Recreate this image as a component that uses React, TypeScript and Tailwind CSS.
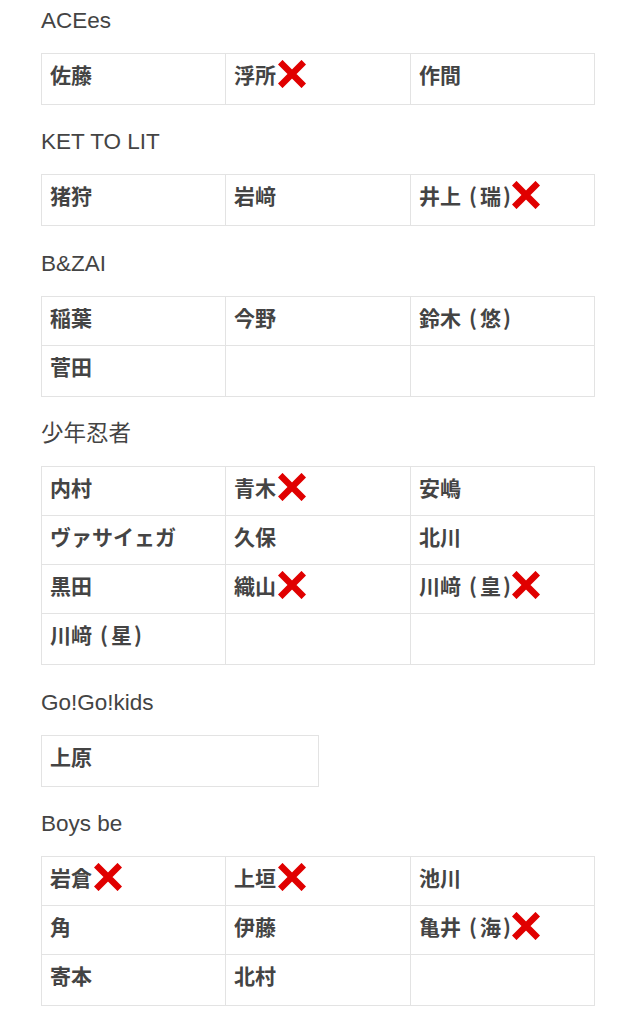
type Member = { name: string; sub?: string; out?: boolean };

const groups: { name: string; cols: number; extra: string; members: Member[] }[] = [
  {
    name: 'ACEes',
    cols: 3,
    extra: 'pt-[6px]',
    members: [{ name: '佐藤' }, { name: '浮所', out: true }, { name: '作間' }],
  },
  {
    name: 'KET TO LIT',
    cols: 3,
    extra: 'pt-[6px]',
    members: [{ name: '猪狩' }, { name: '岩﨑' }, { name: '井上', sub: '瑞', out: true }],
  },
  {
    name: 'B&ZAI',
    cols: 3,
    extra: 'pt-[7px]',
    members: [{ name: '稲葉' }, { name: '今野' }, { name: '鈴木', sub: '悠' }, { name: '菅田' }],
  },
  {
    name: '少年忍者',
    cols: 3,
    extra: 'pt-[6px]',
    members: [
      { name: '内村' }, { name: '青木', out: true }, { name: '安嶋' },
      { name: 'ヴァサイェガ' }, { name: '久保' }, { name: '北川' },
      { name: '黒田' }, { name: '織山', out: true }, { name: '川﨑', sub: '皇', out: true },
      { name: '川﨑', sub: '星' },
    ],
  },
  { name: 'Go!Go!kids', cols: 1, extra: 'pt-[7px]', members: [{ name: '上原' }] },
  {
    name: 'Boys be',
    cols: 3,
    extra: 'pt-[6px]',
    members: [
      { name: '岩倉', out: true }, { name: '上垣', out: true }, { name: '池川' },
      { name: '角' }, { name: '伊藤' }, { name: '亀井', sub: '海', out: true },
      { name: '寄本' }, { name: '北村' },
    ],
  },
];

function Cross() {
  return (
    <svg width="28" height="28" viewBox="0 0 28 28" className="ml-[2px] shrink-0">
      <path d="M4.5 4.5 L23.5 23.5 M23.5 4.5 L4.5 23.5" stroke="#e00000" strokeWidth="6.5" strokeLinecap="square" />
    </svg>
  );
}

function Group({ name, cols, extra, members }: (typeof groups)[number]) {
  const cells: (Member | null)[] = [...members];
  while (cells.length % cols !== 0) cells.push(null);
  const rows = cells.length / cols;
  return (
    <section className={extra}>
      <h2 className="text-[22.5px] leading-[30px] text-[#444] font-['Liberation_Sans','Noto_Sans_CJK_JP',sans-serif]">
        {name}
      </h2>
      <div
        className={
          cols === 3
            ? 'mt-[17px] grid w-[554px] grid-cols-[184px_185px_184px] border-l border-t border-[#e3e3e3]'
            : 'mt-[17px] grid w-[278px] grid-cols-[277px] border-l border-t border-[#e3e3e3]'
        }
      >
        {cells.map((c, i) => (
          <div
            key={i}
            className={
              (Math.floor(i / cols) === rows - 1 ? 'h-[51px] ' : 'h-[49px] ') +
              'flex items-start border-b border-r border-[#e3e3e3] pl-[8px] pt-[6px]'
            }
          >
            {c && (
              <div className="flex items-center">
                <span className="flex text-[21px] leading-[28px] font-bold text-[#444] font-['Noto_Sans_CJK_JP',sans-serif]">
                  <span>{c.name}</span>
                  {c.sub && (
                    <>
                      <span className="inline-block w-[19px] pr-[3px] text-right">(</span>
                      <span>{c.sub}</span>
                      <span className="inline-block w-[9px] pl-[2px]">)</span>
                    </>
                  )}
                </span>
                {c.out && <Cross />}
              </div>
            )}
          </div>
        ))}
      </div>
    </section>
  );
}

export default function App() {
  return (
    <div className="min-h-screen bg-white pl-[41px]">
      <div className="flex flex-col gap-[16px]">
        {groups.map((g, i) => (
          <Group key={i} {...g} />
        ))}
      </div>
    </div>
  );
}
